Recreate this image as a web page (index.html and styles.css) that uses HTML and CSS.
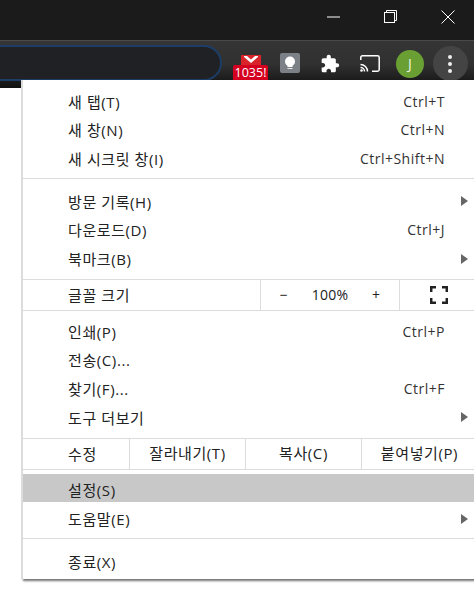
FILE: index.html
```html
<!DOCTYPE html>
<html lang="ko">
<head>
  <meta charset="UTF-8" />
  <title>메뉴</title>
  <link rel="stylesheet" href="styles.css">
</head>
<body>

  <div class="titlebar">
    <svg class="win-icon" width="13" height="2" viewBox="0 0 13 2"><path d="M0 1H13" stroke="#fff" stroke-width="1"/></svg>
    <svg class="win-icon" width="13" height="13" viewBox="0 0 13 13" fill="none" stroke="#fff" stroke-width="1"><rect x="0.5" y="2.5" width="10" height="10"/><path d="M2.5 2.5V.5H12.5V10.5H10.5"/></svg>
    <svg class="win-icon" width="14" height="14" viewBox="0 0 14 14" stroke="#fff" stroke-width="1"><path d="M.5 .5L13.5 13.5M13.5 .5L.5 13.5"/></svg>
  </div>

  <div class="toolbar">
    <div class="omnibox"></div>
    <div class="ext-gmail">
      <svg width="20" height="11" viewBox="0 0 20 11"><rect width="20" height="11" fill="#d9232b"/><path d="M3 1H6L10 4.500L14 1H17V2L10 8L3 2Z" fill="#fff"/></svg>
      <span class="badge">1035!</span>
    </div>
    <div class="ext-keep">
      <svg width="20" height="20" viewBox="0 0 20 20"><rect width="20" height="20" rx="2" fill="#7c8087"/><circle cx="10" cy="8.500" r="5" fill="#fff"/><rect x="7.500" y="12" width="5" height="2" fill="#fff"/><rect x="7.500" y="15" width="5" height="1" fill="#e8e8e8"/></svg>
    </div>
    <svg class="tool-icon" width="20" height="20" viewBox="0 0 24 24"><path fill="#fff" d="M20.500 11H19V7c0-1.100-.9-2-2-2h-4V3.500C13 2.120 11.880 1 10.500 1S8 2.120 8 3.500V5H4c-1.100 0-1.990.9-1.990 2v3.800H3.500c1.490 0 2.700 1.210 2.700 2.700s-1.210 2.700-2.700 2.700H2V20c0 1.100.9 2 2 2h3.800v-1.500c0-1.490 1.210-2.700 2.700-2.700 1.490 0 2.700 1.210 2.700 2.700V22H17c1.100 0 2-.9 2-2v-4h1.500c1.380 0 2.500-1.120 2.500-2.500S21.880 11 20.500 11z"/></svg>
    <svg class="tool-icon" width="20" height="17" viewBox="0 0 20 17" fill="none" stroke="#fff" stroke-width="1.500"><path d="M.8 5V2.500Q.8 .8 2.500 .8H17.500Q19.200 .8 19.200 2.500V14.500Q19.200 16.200 17.500 16.200H12"/><path d="M.5 9.500A7 7 0 0 1 7.500 16.500"/><path d="M.5 12.500A4 4 0 0 1 4.500 16.500"/><circle cx="1.500" cy="15.500" r="1.300" fill="#fff" stroke="none"/></svg>
    <div class="avatar">J</div>
    <div class="kebab"><i></i><i></i><i></i></div>
  </div>

  <div class="menu">
    <div class="group first">
      <div class="item"><span>새 탭(T)</span><span class="key">Ctrl+T</span></div>
      <div class="item"><span>새 창(N)</span><span class="key">Ctrl+N</span></div>
      <div class="item"><span>새 시크릿 창(I)</span><span class="key">Ctrl+Shift+N</span></div>
    </div>
    <div class="group second">
      <div class="item"><span>방문 기록(H)</span><i class="arrow"></i></div>
      <div class="item"><span>다운로드(D)</span><span class="key">Ctrl+J</span></div>
      <div class="item"><span>북마크(B)</span><i class="arrow"></i></div>
    </div>
    <div class="zoom-row">
      <span class="zoom-label">글꼴 크기</span>
      <div class="zoom-ctl"><span class="zoom-btn">−</span><span class="zoom-val">100%</span><span class="zoom-btn">+</span></div>
      <div class="zoom-full">
        <svg width="18" height="18" viewBox="0 0 18 18" fill="none" stroke="#222" stroke-width="2.500"><path d="M1.200 6V1.200H6M12 1.200H16.800V6M16.800 12V16.800H12M6 16.800H1.200V12"/></svg>
      </div>
    </div>
    <div class="group third">
      <div class="item"><span>인쇄(P)</span><span class="key">Ctrl+P</span></div>
      <div class="item"><span>전송(C)...</span></div>
      <div class="item"><span>찾기(F)...</span><span class="key">Ctrl+F</span></div>
      <div class="item"><span>도구 더보기</span><i class="arrow"></i></div>
    </div>
    <div class="edit-row">
      <span class="edit-label">수정</span>
      <span class="edit-btn">잘라내기(T)</span>
      <span class="edit-btn">복사(C)</span>
      <span class="edit-btn">붙여넣기(P)</span>
    </div>
    <div class="group fourth">
      <div class="item hover"><span>설정(S)</span></div>
      <div class="item"><span>도움말(E)</span><i class="arrow"></i></div>
    </div>
    <div class="group last">
      <div class="item"><span>종료(X)</span></div>
    </div>
  </div>

</body>
</html>
```

FILE: styles.css
```css
* {
  box-sizing: border-box;
}

html, body {
  height: 100%;
}

body {
  margin: 0;
  background: #fff;
  overflow: hidden;
  font-family: "Open Sans", "Noto Sans CJK KR", sans-serif;
  font-size: 14px;
  color: #222;
}

.titlebar {
  height: 40px;
  background: #1b1b1b;
  display: flex;
  justify-content: flex-end;
  align-items: center;
  padding: 0 19px 7px 0;
  gap: 44px;
}

.win-icon {
  display: block;
}

.toolbar {
  position: relative;
  height: 48px;
  padding-right: 6px;
  border-top: 1px solid #4a4a4a;
  background: linear-gradient(#353535, #303030 24px, #111 47px);
  display: flex;
  align-items: flex-start;
}

.omnibox {
  width: 242px;
  height: 36px;
  margin: 4px auto 0 -20px;
  background: #202124;
  border: 2px solid #1c3d66;
  border-radius: 18px;
}

.ext-gmail {
  position: relative;
  width: 35px;
  margin-top: 14px;
  text-align: center;
}

.ext-gmail svg {
  display: block;
  margin: 0 auto;
}

.badge {
  position: absolute;
  left: 0;
  top: 10px;
  width: 35px;
  height: 15px;
  overflow: hidden;
  background: #d50020;
  color: #fff;
  font-size: 12.500px;
  line-height: 15px;
  border-radius: 2px 2px 0 0;
  white-space: nowrap;
}

.ext-keep {
  margin: 12px 0 0 12px;
}

.ext-keep svg, .tool-icon {
  display: block;
}

.tool-icon {
  margin-top: 13px;
  margin-left: 20px;
}

.tool-icon + .tool-icon {
  margin-top: 14px;
  margin-left: 20px;
}

.avatar {
  width: 28px;
  height: 28px;
  margin: 9px 0 0 16px;
  border-radius: 50%;
  background: #6aa033;
  color: #f0f4e8;
  font-size: 14px;
  line-height: 28px;
  text-align: center;
}

.kebab {
  width: 35px;
  height: 35px;
  margin: 5px 0 0 9px;
  padding-right: 2px;
  border-radius: 50%;
  background: #444;
  display: flex;
  flex-direction: column;
  justify-content: center;
  align-items: center;
  gap: 3px;
}

.kebab i {
  width: 4px;
  height: 4px;
  border-radius: 50%;
  background: #eee;
}

.menu {
  position: absolute;
  left: 21px;
  top: 80px;
  right: 0;
  height: 499px;
  background: #fff;
  border-left: 2px solid #dcdcdc;
  box-shadow: 2px 2px 2px rgba(0, 0, 0, 0.55);
  font-size: 15px;
  letter-spacing: 0.6px;
}

.group {
  border-bottom: 1px solid #dcdcdc;
}

.first { padding: 8px 0 4px; }
.second { padding: 9px 0 5px; }
.third { padding: 7px 0 5px; }
.fourth { padding: 4px 0 7px; }
.last { padding: 9px 0 2px; border-bottom: none; }

.item {
  height: 28.67px;
  padding: 0 29px 2px 45px;
  display: flex;
  justify-content: space-between;
  align-items: center;
}

.fourth .item {
  padding-top: 4px;
  padding-bottom: 0;
}

.hover {
  background: #c8c8c8;
}

.key {
  color: #333;
  font-size: 14px;
  letter-spacing: 0.5px;
}

.arrow {
  width: 0;
  height: 0;
  margin-right: -23px;
  border-left: 7px solid #666;
  border-top: 5px solid transparent;
  border-bottom: 5px solid transparent;
}

.zoom-row {
  height: 31px;
  border-bottom: 1px solid #dcdcdc;
  display: flex;
  align-items: center;
}

.zoom-label {
  width: 237px;
  padding-left: 45px;
}

.zoom-ctl {
  width: 140px;
  height: 100%;
  border-left: 1px solid #dcdcdc;
  border-right: 1px solid #dcdcdc;
  display: flex;
  justify-content: space-around;
  align-items: center;
  padding: 0 7px;
  font-size: 14px;
  letter-spacing: 0.2px;
}

.zoom-full {
  flex: 1;
  padding-left: 4px;
  display: flex;
  justify-content: center;
  align-items: center;
}

.zoom-full svg {
  display: block;
}

.edit-row {
  height: 31px;
  border-bottom: 1px solid #dcdcdc;
  display: flex;
  align-items: center;
}

.edit-label {
  flex: none;
  width: 106px;
  padding-left: 45px;
}

.edit-btn {
  flex: none;
  width: 116px;
  height: 100%;
  border-left: 1px solid #dcdcdc;
  text-align: center;
  line-height: 29px;
}
```
